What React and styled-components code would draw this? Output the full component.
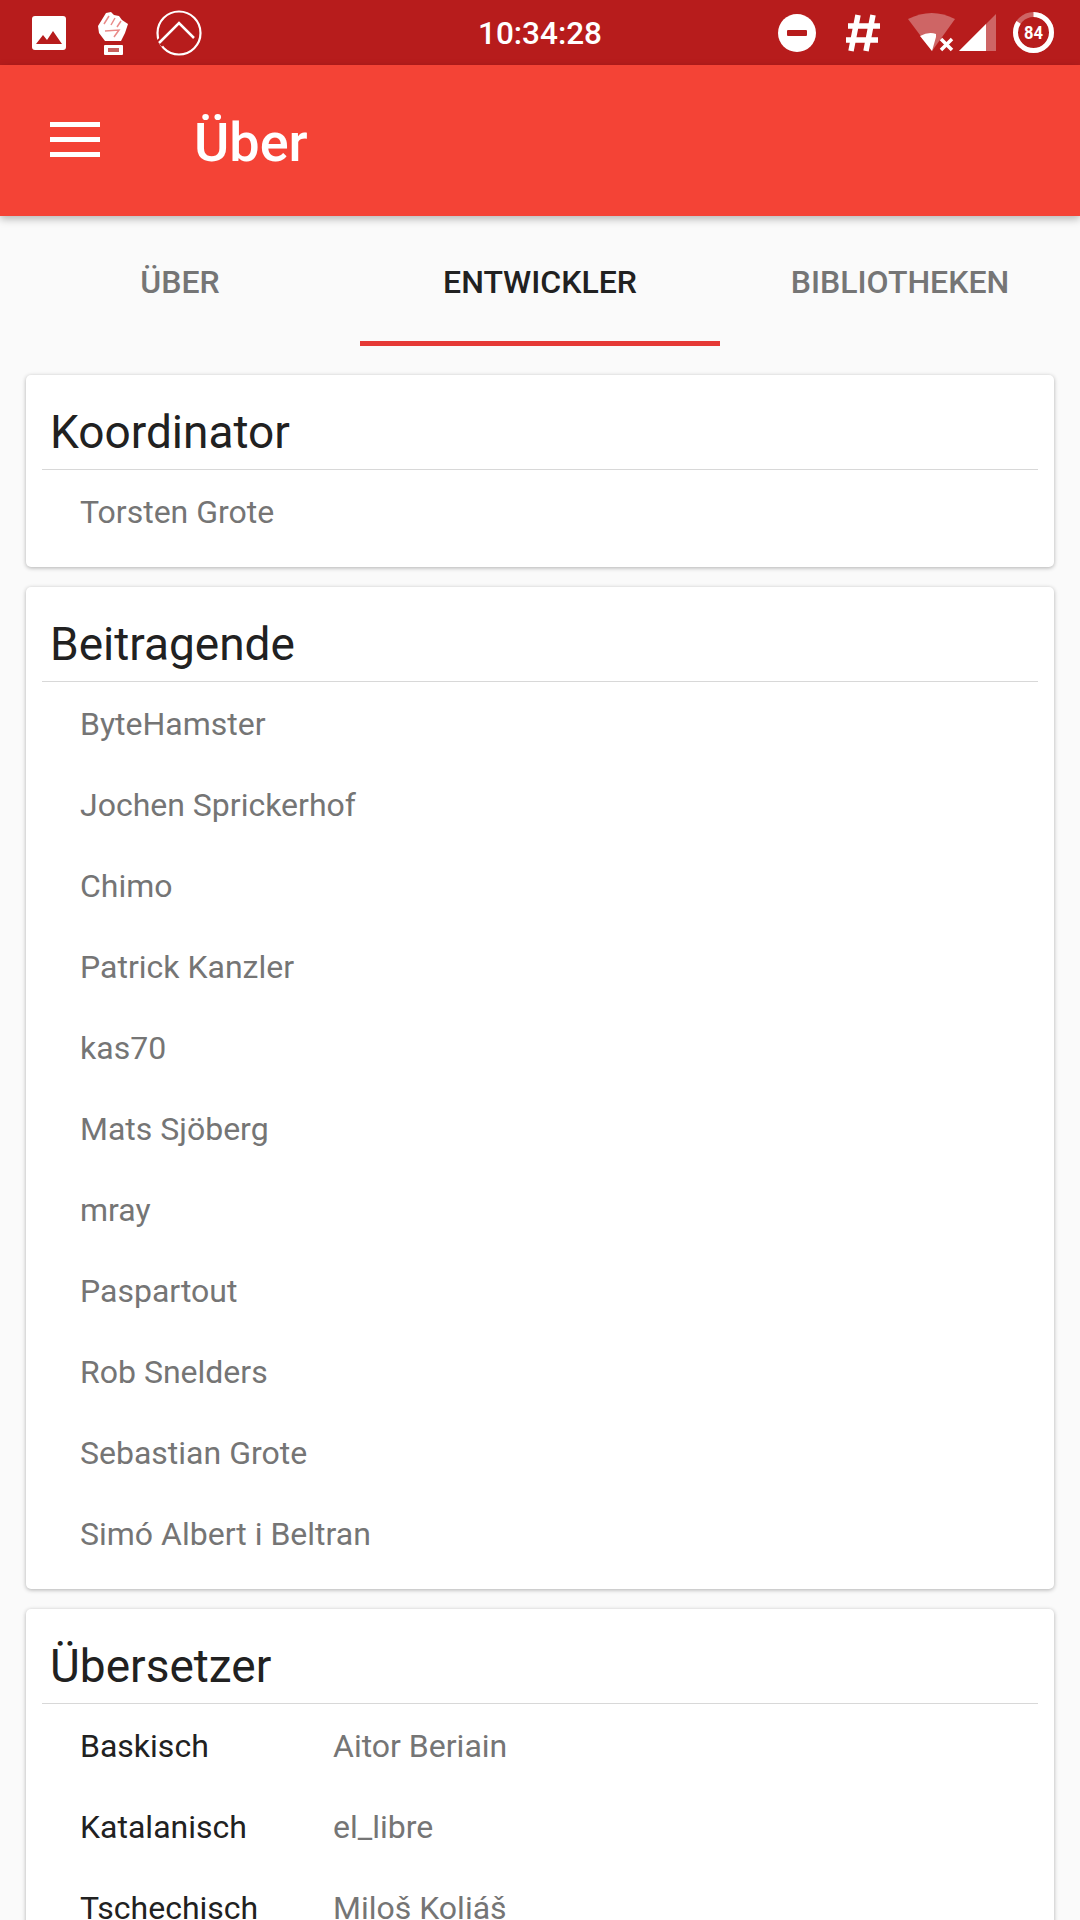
import React from 'react';
import styled, { createGlobalStyle } from 'styled-components';

const GlobalStyle = createGlobalStyle`
  html, body {
    margin: 0;
    padding: 0;
    background: #fafafa;
  }
  * {
    box-sizing: border-box;
  }
`;

const Page = styled.div`
  width: 1080px;
  height: 1920px;
  overflow: hidden;
  background: #fafafa;
  font-family: Roboto, "Liberation Sans", sans-serif;
`;

const StatusBar = styled.div`
  height: 65px;
  background: #b71c1c;
  display: grid;
  grid-template-columns: 1fr auto 1fr;
  align-items: center;
`;

const StatusLeft = styled.div`
  display: flex;
  align-items: center;
  padding-left: 32px;
`;

const StatusRight = styled.div`
  display: flex;
  align-items: center;
  justify-content: flex-end;
  padding-right: 26px;
`;

const Clock = styled.div`
  color: #fff;
  font-size: 31.5px;
  font-weight: 500;
  padding-top: 2px;
`;

const StatusIcon = styled.svg`
  display: block;
  flex: none;
  margin-left: ${(p) => p.$gap || 0}px;
`;

const Toolbar = styled.header`
  position: relative;
  z-index: 2;
  height: 151px;
  background: #f44336;
  display: flex;
  align-items: center;
  padding-left: 50px;
  box-shadow: 0 3px 8px rgba(0, 0, 0, 0.28);
`;

const Burger = styled.div`
  width: 50px;
  height: 35px;
  display: flex;
  flex-direction: column;
  justify-content: space-between;
  margin-top: -3px;
`;

const BurgerBar = styled.span`
  display: block;
  height: 5px;
  background: #fff;
`;

const ToolbarTitle = styled.h1`
  margin: 4px 0 0 94px;
  color: #fff;
  font-size: 54px;
  font-weight: 500;
`;

const Tabs = styled.nav`
  height: 130px;
  display: grid;
  grid-template-columns: repeat(3, 360px);
`;

const Tab = styled.div`
  display: flex;
  align-items: center;
  justify-content: center;
  padding-top: 7px;
  font-size: 32px;
  font-weight: 500;
  text-transform: uppercase;
  color: ${(p) => (p.$active ? '#212121' : '#757575')};
  border-bottom: 5px solid ${(p) => (p.$active ? '#e53935' : 'transparent')};
`;

const Content = styled.main`
  padding: 29px 26px 0;
  display: flex;
  flex-direction: column;
  gap: 20px;
`;

const Card = styled.section`
  background: #fff;
  border-radius: 5px;
  padding: 0 16px 16px;
  box-shadow: 0 1px 4px rgba(0, 0, 0, 0.3);
`;

const CardTitle = styled.h2`
  margin: 0;
  height: 95px;
  padding: 28px 0 0 8px;
  border-bottom: 1px solid #d8d8d8;
  color: #212121;
  font-size: 46px;
  font-weight: 400;
  line-height: 58px;
`;

const Row = styled.div`
  height: 81px;
  display: flex;
  align-items: center;
  padding: 3px 0 0 38px;
  font-size: 32px;
`;

const Language = styled.span`
  width: 253px;
  color: #212121;
`;

const Name = styled.span`
  color: #757575;
`;

const contributors = [
  'ByteHamster',
  'Jochen Sprickerhof',
  'Chimo',
  'Patrick Kanzler',
  'kas70',
  'Mats Sjöberg',
  'mray',
  'Paspartout',
  'Rob Snelders',
  'Sebastian Grote',
  'Simó Albert i Beltran',
];

const translators = [
  { language: 'Baskisch', name: 'Aitor Beriain' },
  { language: 'Katalanisch', name: 'el_libre' },
  { language: 'Tschechisch', name: 'Miloš Koliáš' },
];

function App() {
  return (
    <Page>
      <GlobalStyle />
      <StatusBar>
        <StatusLeft>
          <StatusIcon width="34" height="34" viewBox="0 0 34 34">
            <rect width="34" height="34" rx="3" fill="#fff" />
            <path d="M4 28 L11 19 L15 24 L21 15 L30 28 Z" fill="#b71c1c" />
          </StatusIcon>
          <StatusIcon $gap="31" width="32" height="44" viewBox="0 0 32 44">
            <path d="M1 15 L9 2 L14 1 L17 4 L22 5 L25 9 L31 13 L28 22 L24 30 L8 30 L2 22 Z" fill="#fff" />
            <path d="M7 13 L12 5 M14 14 L18 7 M20 16 L24 10 M8 20 L22 19 L17 26" fill="none" stroke="#e98a88" strokeWidth="1.5" />
            <rect x="7" y="34" width="19" height="10" rx="1" fill="#fff" />
            <rect x="11" y="37" width="11" height="4" fill="#c9605e" />
          </StatusIcon>
          <StatusIcon $gap="27" width="46" height="46" viewBox="0 0 46 46">
            <circle cx="23" cy="23" r="21.5" fill="none" stroke="#fff" strokeWidth="2.2" />
            <path d="M3 34 L23 13 L38 28" fill="none" stroke="#b71c1c" strokeWidth="8" />
            <path d="M3 33 L23 13 L38 28" fill="none" stroke="#fff" strokeWidth="2.5" />
          </StatusIcon>
        </StatusLeft>
        <Clock>10:34:28</Clock>
        <StatusRight>
          <StatusIcon width="38" height="38" viewBox="0 0 38 38">
            <circle cx="19" cy="19" r="19" fill="#fff" />
            <rect x="9" y="16" width="20" height="6" rx="1" fill="#b71c1c" />
          </StatusIcon>
          <StatusIcon $gap="29" width="36" height="38" viewBox="0 0 36 38">
            <path d="M13 1 L6 37 M28 1 L21 37 M3 12 L35 12 M1 26 L33 26" fill="none" stroke="#fff" strokeWidth="5.5" />
          </StatusIcon>
          <StatusIcon $gap="27" width="48" height="39" viewBox="0 0 48 39">
            <path d="M0 6 Q24 -6 47 6 L24 38 Z" fill="#fff" fillOpacity="0.32" />
            <path d="M12 23 Q21 18 28 21 L28 24 L24 38 Z" fill="#fff" />
            <path d="M33 26 L44 37 M44 26 L33 37" stroke="#fff" strokeWidth="3.5" fill="none" />
          </StatusIcon>
          <StatusIcon $gap="3" width="38" height="38" viewBox="0 0 38 38">
            <path d="M37 0 L37 37 L0 37 Z" fill="#fff" fillOpacity="0.32" />
            <path d="M27 10 L27 37 L0 37 Z" fill="#fff" />
          </StatusIcon>
          <StatusIcon $gap="16" width="41" height="41" viewBox="0 0 41 41">
            <circle cx="20.5" cy="20.5" r="18" fill="none" stroke="#fff" strokeOpacity="0.32" strokeWidth="5" />
            <circle cx="20.5" cy="20.5" r="18" fill="none" stroke="#fff" strokeWidth="5" strokeDasharray="95 113" transform="rotate(-90 20.5 20.5)" />
            <text x="20.5" y="27" textAnchor="middle" fontSize="19" fontWeight="700" fill="#fff" fontFamily="Roboto, sans-serif" textLength="19" lengthAdjust="spacingAndGlyphs">84</text>
          </StatusIcon>
        </StatusRight>
      </StatusBar>

      <Toolbar>
        <Burger>
          <BurgerBar />
          <BurgerBar />
          <BurgerBar />
        </Burger>
        <ToolbarTitle>Über</ToolbarTitle>
      </Toolbar>

      <Tabs>
        <Tab>Über</Tab>
        <Tab $active>Entwickler</Tab>
        <Tab>Bibliotheken</Tab>
      </Tabs>

      <Content>
        <Card>
          <CardTitle>Koordinator</CardTitle>
          <Row><Name>Torsten Grote</Name></Row>
        </Card>
        <Card>
          <CardTitle>Beitragende</CardTitle>
          {contributors.map((name) => (
            <Row key={name}><Name>{name}</Name></Row>
          ))}
        </Card>
        <Card>
          <CardTitle>Übersetzer</CardTitle>
          {translators.map((t) => (
            <Row key={t.language}>
              <Language>{t.language}</Language>
              <Name>{t.name}</Name>
            </Row>
          ))}
        </Card>
      </Content>
    </Page>
  );
}

export default App;
